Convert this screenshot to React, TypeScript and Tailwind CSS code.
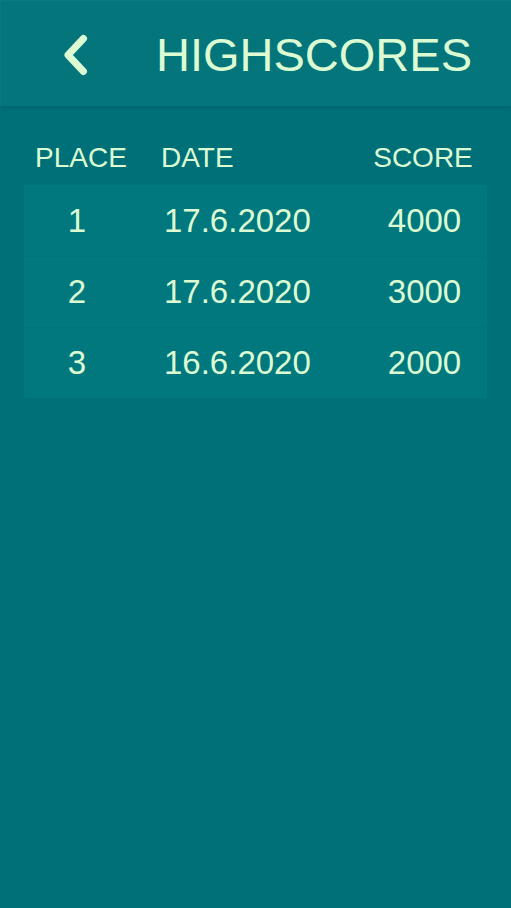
import React from "react";

const rows = [
  { place: "1", date: "17.6.2020", score: "4000" },
  { place: "2", date: "17.6.2020", score: "3000" },
  { place: "3", date: "16.6.2020", score: "2000" },
];

export default function App() {
  return (
    <div
      className="w-[511px] h-[908px] bg-[#007078] text-[#dcfbd3] overflow-hidden flex flex-col"
      style={{ fontFamily: '"Liberation Sans", Arial, sans-serif' }}
    >
      <header className="h-[106px] bg-[#04757b] border-t border-l border-[#0b7a80] shadow-[0_2px_3px_rgba(0,80,85,0.35)] flex items-center relative z-10">
        <div className="w-[61px]" />
        <svg width="26" height="42" viewBox="0 0 26 42" className="mt-[2px]">
          <path
            d="M21.5 4.5 L6 21 L21.5 37.5"
            fill="none"
            stroke="#dcfbd3"
            strokeWidth="7"
            strokeLinecap="round"
            strokeLinejoin="round"
          />
        </svg>
        <h1 className="ml-[68px] text-[47px] leading-none font-normal tracking-[0px] mt-[1px]">
          HIGHSCORES
        </h1>
      </header>
      <div className="px-[24px] pt-[29px]">
        <div className="grid grid-cols-[114px_1fr_124px] h-[46px] items-center text-[28px] leading-none">
          <div className="text-center">PLACE</div>
          <div className="pl-[23px]">DATE</div>
          <div className="text-center pr-[4px]">SCORE</div>
        </div>
        <div className="mt-[4px] flex flex-col">
          {rows.map((r, i) => (
            <div
              key={r.place}
              className={`grid grid-cols-[106px_1fr_124px] h-[71px] items-center text-[33px] leading-none bg-[#00787e] ${
                i > 0 ? "border-t border-[#02737a]" : ""
              }`}
            >
              <div className="text-center pb-[1px]">{r.place}</div>
              <div className="pl-[34px] pb-[1px]">{r.date}</div>
              <div className="text-center pr-[1px] pb-[1px]">{r.score}</div>
            </div>
          ))}
        </div>
      </div>
    </div>
  );
}
